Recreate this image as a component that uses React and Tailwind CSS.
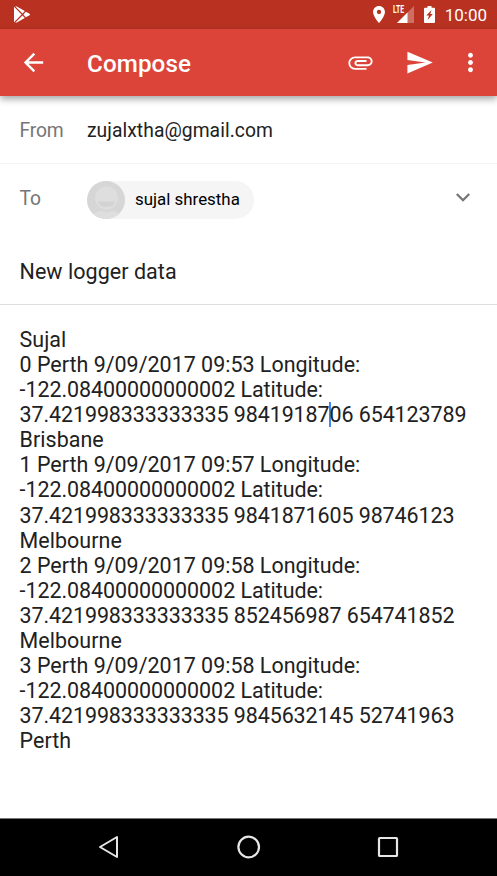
const BODY_LINES = [
  "Sujal",
  "0 Perth 9/09/2017 09:53 Longitude:",
  "-122.08400000000002 Latitude:",
  ["37.421998333333335 98419187", "06 654123789"],
  "Brisbane",
  "1 Perth 9/09/2017 09:57 Longitude:",
  "-122.08400000000002 Latitude:",
  "37.421998333333335 9841871605 98746123",
  "Melbourne",
  "2 Perth 9/09/2017 09:58 Longitude:",
  "-122.08400000000002 Latitude:",
  "37.421998333333335 852456987 654741852",
  "Melbourne",
  "3 Perth 9/09/2017 09:58 Longitude:",
  "-122.08400000000002 Latitude:",
  "37.421998333333335 9845632145 52741963",
  "Perth",
];

// Digit-heavy lines are set slightly tighter than lines made of words.
function lineTracking(line) {
  const text = Array.isArray(line) ? line.join("") : line;
  if (text.startsWith("37.")) return "tracking-[-.08px]";
  if (text.startsWith("-122")) return "tracking-[-.04px]";
  if (text.endsWith("Longitude:")) return "tracking-[.01px]";
  return "tracking-[.06px]";
}

function Icon({ d, className = "" }) {
  return (
    <svg viewBox="0 0 24 24" fill="currentColor" className={`size-[29px] shrink-0 ${className}`}>
      <path d={d} />
    </svg>
  );
}

function StatusBar() {
  return (
    <div className="flex h-[29px] shrink-0 items-center bg-[#b93221] pr-[10px] pl-[14px] text-white">
      <svg viewBox="0 0 16 17" fill="currentColor" className="h-[17px] w-4">
        <path d="M0 .8L7.6 8.5 0 16.2zM1.2.3L2.8.5l8 4.6-2.3 2.5zM1.2 16.7l7.3-7.3 2.3 2.5-8 4.6zM9.4 8.5l2.4-2.8L15.6 7.8q.7.7 0 1.4l-3.8 2.1z" />
      </svg>
      <svg viewBox="5 2 14 20" fill="currentColor" className="ml-auto h-[17px] w-[12px]">
        <path d="M12 2C8.13 2 5 5.13 5 9c0 5.25 7 13 7 13s7-7.75 7-13c0-3.87-3.13-7-7-7zm0 9.5c-1.38 0-2.5-1.12-2.5-2.5s1.12-2.5 2.5-2.5 2.5 1.12 2.5 2.5-1.12 2.5-2.5 2.5z" />
      </svg>
      <div className="relative ml-2 h-[17px] w-[21px]">
        <svg viewBox="0 0 21 17" className="size-full">
          <path d="M21 0v17H4z" fill="#ffffff" fillOpacity=".3" />
          <path d="M0 0h12.500v9H0z" fill="#b93221" />
          <path d="M14.500 6.500V17H4z" fill="#fff" />
        </svg>
        <span className="absolute top-0 left-0 origin-left scale-x-[.62] text-[11px] leading-[8px] font-bold">LTE</span>
      </div>
      <svg viewBox="0 0 11 17" className="ml-[10px] h-[17px] w-[11px]">
        <path d="M3.5 0h4v1.7H10q1 0 1 1V16q0 1-1 1H1q-1 0-1-1V2.700q0-1 1-1h2.500z" fill="#fff" />
        <path d="M7.500 4L2.300 9.500h2.700L3.700 14 8.800 8H6.300z" fill="#b93221" />
      </svg>
      <span className="mt-px ml-[10px] text-[17px] leading-none">10:00</span>
    </div>
  );
}

function Toolbar() {
  return (
    <div className="z-10 flex h-[67px] shrink-0 items-center bg-[#dd4439] pl-[19px] text-white shadow-[0_3px_7px_rgba(0,0,0,0.36)]">
      <Icon d="M20 11H7.830l5.590-5.590L12 4l-8 8 8 8 1.410-1.410L7.830 13H20v-2z" />
      <h1 className="mt-[3px] ml-[39px] text-[24.200px] font-medium tracking-[.1px]">Compose</h1>
      <div className="ml-auto flex w-[151px]">
        <Icon d="M2 12.5C2 9.460 4.460 7 7.500 7H18c2.210 0 4 1.790 4 4s-1.790 4-4 4H9.500C8.120 15 7 13.880 7 12.500S8.120 10 9.500 10H17v1.500H9.500c-1.200 0-1.200 2 0 2H18c1.400 0 2.500-1.100 2.500-2.500s-1.100-2.500-2.500-2.500H7.500C5.300 8.500 3.500 10.300 3.500 12.500S5.300 16.500 7.500 16.500H17v1.500H7.500C4.460 18 2 15.540 2 12.500z" />
        <Icon className="ml-[29.500px]" d="M2.010 21L23 12 2.010 3 2 10l15 2-15 2z" />
        <Icon className="ml-[22.500px]" d="M12 8c1.100 0 2-.9 2-2s-.9-2-2-2-2 .9-2 2 .9 2 2 2zm0 2c-1.100 0-2 .9-2 2s.9 2 2 2 2-.9 2-2-.9-2-2-2zm0 6c-1.100 0-2 .9-2 2s.9 2 2 2 2-.9 2-2-.9-2-2-2z" />
      </div>
    </div>
  );
}

function Avatar() {
  return (
    <svg viewBox="0 0 38 38" className="size-[38px] overflow-hidden rounded-full">
      <rect width="38" height="38" fill="#d6d6d6" />
      <circle cx="19.500" cy="17" r="11.500" fill="#dedede" />
      <path d="M11 20.500h17q-1 5.500-8.500 5.500t-8.500-5.500z" fill="#d3d3d3" />
      <path d="M5 38q1-8 9-8q5.500 2 11 0q8 0 9 8z" fill="#dedede" />
    </svg>
  );
}

function Caret() {
  return <span className="-mx-px inline-block h-[25px] w-[2px] bg-[#4285f4] align-top" />;
}

function NavBar() {
  return (
    <div className="flex h-[58px] shrink-0 items-center justify-between border-t border-[#777] bg-black pr-[98px] pb-px pl-[98px]">
      <svg viewBox="0 0 22 24" className="h-6 w-[22px]" fill="none" stroke="#e6e6e6" strokeWidth="2" strokeLinejoin="round">
        <path d="M19 2v20L2 12z" />
      </svg>
      <svg viewBox="0 0 24 24" className="size-6" fill="none" stroke="#e6e6e6" strokeWidth="2.200">
        <circle cx="11.700" cy="12" r="10.300" />
      </svg>
      <svg viewBox="0 0 22 22" className="mb-px size-[22px]" fill="none" stroke="#e6e6e6" strokeWidth="2.200">
        <rect x="2" y="2" width="18" height="18" rx=".8" />
      </svg>
    </div>
  );
}

export default function App() {
  return (
    <div className="flex h-[876px] w-[497px] flex-col overflow-hidden bg-white font-[Roboto,sans-serif] text-[#212121]">
      <StatusBar />
      <Toolbar />
      <main className="flex grow flex-col pl-[19.500px]">
        <div className="-ml-[19.500px] flex h-[68px] items-center border-b border-[#f5f5f5] pt-[3px] pl-[19.500px] text-[19.300px]">
          <span className="w-[67.500px] tracking-[-.15px] text-[#757575]">From</span>
          <span className="tracking-[.05px]">zujalxtha@gmail.com</span>
        </div>
        <div className="flex h-[71px] items-center pr-[27px]">
          <span className="w-[67.500px] pb-px text-[19.300px] tracking-[-.15px] text-[#757575]">To</span>
          <div className="flex h-[38px] w-[167px] items-center rounded-full bg-[#f5f5f5]">
            <Avatar />
            <span className="ml-[10px] text-[16.900px] text-black">sujal shrestha</span>
          </div>
          <svg viewBox="0 0 14 9" className="mb-[5px] ml-auto h-[9px] w-[14px]" fill="none" stroke="#757575" strokeWidth="2.300">
            <path d="M.8 1L7 7.200 13.200 1" />
          </svg>
        </div>
        <div className="-ml-[19.500px] flex h-[70px] items-center border-b border-[#dedede] pt-[5px] pl-[19.500px] text-[21.500px] tracking-[.05px]">
          New logger data
        </div>
        <div className="pt-[22px] text-[21.450px] leading-[25.090px] whitespace-pre">
          {BODY_LINES.map((line, i) => (
            <div key={i} className={`h-[25.090px] ${lineTracking(line)}`}>
              {Array.isArray(line) ? (
                <>
                  {line[0]}
                  <Caret />
                  {line[1]}
                </>
              ) : (
                line
              )}
            </div>
          ))}
        </div>
      </main>
      <NavBar />
    </div>
  );
}
